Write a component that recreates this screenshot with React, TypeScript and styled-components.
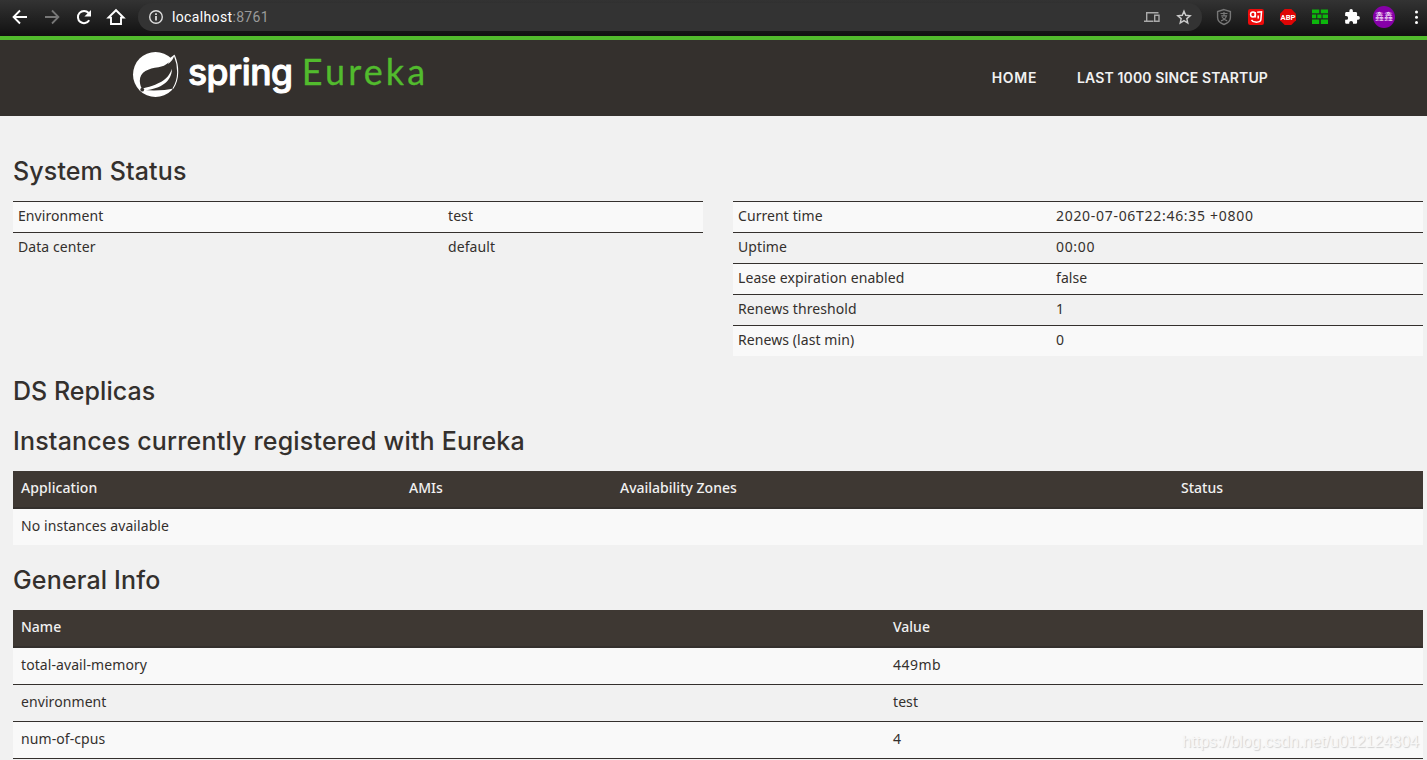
import React from "react";
import styled, { createGlobalStyle } from "styled-components";

const GlobalStyle = createGlobalStyle`
  * { box-sizing: border-box; }
  body {
    margin: 0;
    background: #f1f1f1;
    color: #34302d;
    font-family: "Noto Sans", sans-serif;
    font-size: 14px;
    line-height: 20px;
    overflow: hidden;
  }
`;

const Page = styled.div`
  position: relative;
  height: 760px;
  overflow: hidden;
`;

const BrowserBar = styled.div`
  display: flex;
  align-items: center;
  height: 36px;
  padding: 0 0 2px 10px;
  background: linear-gradient(#333 0, #292929 30%, #111 100%);
`;

const NavButtons = styled.div`
  display: flex;
  gap: 12px;
  margin-right: 12px;
`;

const Glyph = styled.svg`
  display: block;
  flex: none;
  width: 20px;
  height: 20px;
`;

const AddressBar = styled.div`
  display: flex;
  align-items: center;
  flex: none;
  width: 1064px;
  height: 28px;
  padding: 0 8px;
  border-radius: 14px;
  background: #333;
`;

const Url = styled.span`
  flex: 1;
  margin-left: 6px;
  color: #9a9a9a;
  font-family: Roboto, sans-serif;
  font-size: 14px;
  letter-spacing: 0.35px;
`;

const Host = styled.span`
  color: #fff;
`;

const AddressActions = styled.div`
  display: flex;
  gap: 12px;
`;

const Extensions = styled.div`
  display: flex;
  align-items: center;
  gap: 12px;
  margin-left: 12px;
`;

const Avatar = styled.div`
  flex: none;
  width: 22px;
  height: 22px;
  margin: 0 -1px;
  border-radius: 50%;
  background: #8600a8;
  color: #f0d8f6;
  font: 9px/22px "Noto Sans CJK SC", sans-serif;
  text-align: center;
`;

const SiteHeader = styled.header`
  display: flex;
  justify-content: space-between;
  height: 80px;
  padding: 0 159px 0 128px;
  border-top: 4px solid #52bb2d;
  background: #34302d;
`;

const Brand = styled.svg`
  display: block;
  width: 310px;
  height: 70px;
`;

const SiteNav = styled.nav`
  display: flex;
  gap: 40px;
  padding-top: 28px;
`;

const NavLink = styled.a<{ $track: number }>`
  color: #f1f1f1;
  font: 600 14px/20px Inter, sans-serif;
  letter-spacing: ${(p) => p.$track}px;
  white-space: nowrap;
`;

const Content = styled.main`
  padding: 20px 4px 0 13px;
`;

const Heading = styled.h1<{ $track: number }>`
  margin: 21px 0 16px;
  font: 500 25px/28px Inter, sans-serif;
  letter-spacing: ${(p) => p.$track}px;
  white-space: nowrap;

  & + & { margin-top: 22px; }
`;

const StatusColumns = styled.div`
  display: grid;
  grid-template-columns: 690px 690px;
  gap: 30px;
  align-items: start;
`;

const StatusTable = styled.div``;

const StatusRow = styled.div<{ $columns: string }>`
  display: grid;
  grid-template-columns: ${(p) => p.$columns};
  height: 31px;
  padding: 4px 5px 0;
  border-top: 1px solid #34302d;
  &:nth-child(odd) { background: #f9f9f9; }
`;

const DataTable = styled.div``;

const DataHead = styled.div<{ $columns: string }>`
  display: grid;
  grid-template-columns: ${(p) => p.$columns};
  height: 38px;
  padding: 7px 8px 0;
  border-bottom: 2px solid #34302d;
  background: #3e3833;
  color: #f1f1f1;
  font-weight: 500;
`;

const DataRow = styled.div<{ $columns: string }>`
  display: grid;
  grid-template-columns: ${(p) => p.$columns};
  height: 37px;
  padding: 7px 8px 0;
  border-bottom: 1px solid #34302d;
  &:nth-child(even) { background: #f9f9f9; }
`;

const EmptyRow = styled.div`
  height: 36px;
  padding: 7px 8px 0;
  background: #f9f9f9;
`;

const Watermark = styled.div`
  position: absolute;
  right: 8px;
  bottom: 8px;
  color: #f7f7f7;
  font: 16px/20px "Liberation Sans", sans-serif;
  text-shadow: 1px 1px 1px #d2d2d2;
`;

const Cell = styled.span<{ $track?: number }>`
  letter-spacing: ${(p) => p.$track ?? 0.08}px;
  white-space: nowrap;
`;

type Row = [name: string, value: string, track?: number];

const leftRows: Row[] = [
  ["Environment", "test"],
  ["Data center", "default"],
];

const rightRows: Row[] = [
  ["Current time", "2020-07-06T22:46:35 +0800", 0.7],
  ["Uptime", "00:00", 0.65],
  ["Lease expiration enabled", "false"],
  ["Renews threshold", "1"],
  ["Renews (last min)", "0"],
];

const infoRows: Row[] = [
  ["total-avail-memory", "449mb", 0.5],
  ["environment", "test"],
  ["num-of-cpus", "4"],
];

const BrowserToolbar = () => (
  <BrowserBar>
    <NavButtons>
      <Glyph viewBox="0 0 20 20" fill="none" stroke="#fff" strokeWidth="1.9">
        <path d="M17 10H4M10 3.5 3.6 10l6.4 6.5" />
      </Glyph>
      <Glyph viewBox="0 0 20 20" fill="none" stroke="#777" strokeWidth="1.8">
        <path d="M3 10h13M10 3.5l6.4 6.5L10 16.5" />
      </Glyph>
      <Glyph viewBox="0 0 20 20">
        <path d="M15.2 13.3A6.1 6.1 0 1 1 14.6 6" fill="none" stroke="#fff" strokeWidth="2" />
        <path d="M17 3v6.6h-6.6z" fill="#fff" />
      </Glyph>
      <Glyph viewBox="0 0 20 20" fill="none" stroke="#fff" strokeWidth="1.9">
        <path d="M2.5 10.6H5V17h10v-6.4h2.5L10 3.2z" />
      </Glyph>
    </NavButtons>
    <AddressBar>
      <Glyph viewBox="0 0 20 20">
        <circle cx="10" cy="10" r="6.3" fill="none" stroke="#ddd" strokeWidth="1.4" />
        <path d="M9.2 9h1.6v4.5H9.2zM9.2 6.3h1.6v1.6H9.2z" fill="#eee" />
      </Glyph>
      <Url>
        <Host>localhost</Host>:8761
      </Url>
      <AddressActions>
        <Glyph viewBox="0 0 20 20" fill="none" stroke="#aaa" strokeWidth="1.4">
          <path d="M16.5 5.7H4.7v8M2 14.3h9.5M12.7 8.2h4.3v6.1h-4.3z" />
        </Glyph>
        <Glyph viewBox="0 0 20 20" fill="none" stroke="#ccc" strokeWidth="1.4">
          <path d="M10 4.2l1.7 4.1 4.5.4-3.4 2.9 1 4.4-3.8-2.4-3.8 2.4 1-4.4-3.4-2.9 4.5-.4z" />
        </Glyph>
      </AddressActions>
    </AddressBar>
    <Extensions>
      <Glyph viewBox="0 0 20 20" fill="none" stroke="#777" strokeWidth="1.4">
        <path d="M10 2.6l6.4 1.900v6c0 3.600-2.600 5.600-6.400 7-3.800-1.400-6.400-3.400-6.400-7v-6z" />
        <path d="M10 5v3.500M6.500 6.500h7M7.200 8.900h5.300c-.8 2.700-2.700 4.100-5.500 5M8 10c1.400 2 3 3.200 5.200 3.900" strokeWidth="1.2" />
      </Glyph>
      <Glyph viewBox="0 0 20 20">
        <rect x="2" y="2" width="16" height="16" rx="2.2" fill="#ee0b0b" />
        <ellipse cx="7" cy="7.4" rx="2.4" ry="2.5" fill="none" stroke="#fff" strokeWidth="1.5" />
        <path d="M9.300 5v5.600M11.200 5.300l4.300-.5-.6 7.700c-.2 2-2.200 2.800-5.400 2.600-1.800 0-3.200-.8-4-2.300M12.200 8.400v3" fill="none" stroke="#fff" strokeWidth="1.5" />
      </Glyph>
      <Glyph viewBox="0 0 20 20">
        <path d="M6.7 2h6.6L18 6.7v6.6L13.3 18H6.7L2 13.3V6.7z" fill="#df0505" />
        <text x="10" y="12.7" fill="#fff" fontFamily="Roboto, sans-serif" fontSize="7.6" fontWeight="700" textAnchor="middle">ABP</text>
      </Glyph>
      <Glyph viewBox="0 0 20 20" fill="#0db80d">
        <path d="M2 2.4h7.2v3.8H2zM10.8 2.4H18v3.8h-7.2zM2 7.4h4.2v3.8H2zM7.3 7.4h4.2v3.8H7.3zM12.6 7.4H18v3.8h-5.4zM2 12.6h7.2v4.5H2zM10.8 12.6H18v4.5h-7.2z" />
      </Glyph>
      <Glyph viewBox="-2.5 -2 28.5 28.5">
        <path fill="#fff" d="M20.5 11H19V7c0-1.1-.9-2-2-2h-4V3.500a2.500 2.500 0 0 0-5 0V5H4c-1.100 0-2 .9-2 2v3.800h1.500a2.700 2.700 0 0 1 0 5.400H2V20c0 1.100.9 2 2 2h3.800v-1.500a2.700 2.700 0 0 1 5.400 0V22H17c1.100 0 2-.9 2-2v-4h1.500a2.500 2.500 0 0 0 0-5z" />
      </Glyph>
      <Avatar>鑫鑫</Avatar>
      <Glyph viewBox="0 0 20 20" fill="#fff">
        <circle cx="10.5" cy="5" r="1.5" />
        <circle cx="10.5" cy="10.3" r="1.5" />
        <circle cx="10.5" cy="15.6" r="1.5" />
      </Glyph>
    </Extensions>
  </BrowserBar>
);

const SpringEurekaLogo = () => (
  <Brand viewBox="0 0 310 70">
    <circle cx="27.5" cy="34.5" r="22.5" fill="#fff" />
    <path d="M46.7 12C43.5 21.5 38.5 26 30.5 27.2C20.5 28.5 11.8 31.5 11.8 41C12 45 13 48 15 49.8C25 51.2 38 50.3 45.5 48.5L53 38L51 20Z" fill="#34302d" />
    <path d="M46.3 15.2C50.8 26 51.3 39 45 48.5" fill="none" stroke="#fff" strokeWidth="1.1" />
    <path d="M46.7 14.5C45.5 19 43 22 40 24L42 18Z" fill="#fff" />
    <path d="M44 28.7C40.5 38 35 43.5 14.5 48.5L17 50.3C33 48.5 43.5 42 44 28.7Z" fill="#fff" />
    <circle cx="14.2" cy="49.7" r="1.9" fill="#34302d" />
    <text x="60" y="44.5" fill="#fff" stroke="#fff" strokeWidth="1" strokeLinejoin="round" fontFamily="Inter, sans-serif" fontSize="35.5" fontWeight="500" textLength="105">spring</text>
    <text x="173.7" y="45" fill="#52bb2d" stroke="#52bb2d" strokeWidth="0.3" strokeLinejoin="round" fontFamily="Lato, sans-serif" fontSize="36" textLength="123.500">Eureka</text>
  </Brand>
);

export default function App() {
  return (
    <Page>
      <GlobalStyle />
      <BrowserToolbar />
      <SiteHeader>
        <SpringEurekaLogo />
        <SiteNav>
          <NavLink $track={0.7}>HOME</NavLink>
          <NavLink $track={0.13}>LAST 1000 SINCE STARTUP</NavLink>
        </SiteNav>
      </SiteHeader>
      <Content>
        <Heading $track={0.13}>System Status</Heading>
        <StatusColumns>
          <StatusTable>
            {leftRows.map(([name, value]) => (
              <StatusRow key={name} $columns="430px 1fr">
                <Cell>{name}</Cell>
                <Cell>{value}</Cell>
              </StatusRow>
            ))}
          </StatusTable>
          <StatusTable>
            {rightRows.map(([name, value, track]) => (
              <StatusRow key={name} $columns="318px 1fr">
                <Cell>{name}</Cell>
                <Cell $track={track}>{value}</Cell>
              </StatusRow>
            ))}
          </StatusTable>
        </StatusColumns>
        <Heading $track={0.04}>DS Replicas</Heading>
        <Heading $track={0.18}>Instances currently registered with Eureka</Heading>
        <DataTable>
          <DataHead $columns="388px 211px 561px 1fr">
            <Cell>Application</Cell>
            <Cell $track={0}>AMIs</Cell>
            <Cell $track={0}>Availability Zones</Cell>
            <Cell $track={0}>Status</Cell>
          </DataHead>
          <EmptyRow>
            <Cell>No instances available</Cell>
          </EmptyRow>
        </DataTable>
        <Heading $track={0.16}>General Info</Heading>
        <DataTable>
          <DataHead $columns="872px 1fr">
            <Cell $track={0}>Name</Cell>
            <Cell $track={0}>Value</Cell>
          </DataHead>
          {infoRows.map(([name, value, track]) => (
            <DataRow key={name} $columns="872px 1fr">
              <Cell>{name}</Cell>
              <Cell $track={track}>{value}</Cell>
            </DataRow>
          ))}
        </DataTable>
      </Content>
      <Watermark>https://blog.csdn.net/u012124304</Watermark>
    </Page>
  );
}
